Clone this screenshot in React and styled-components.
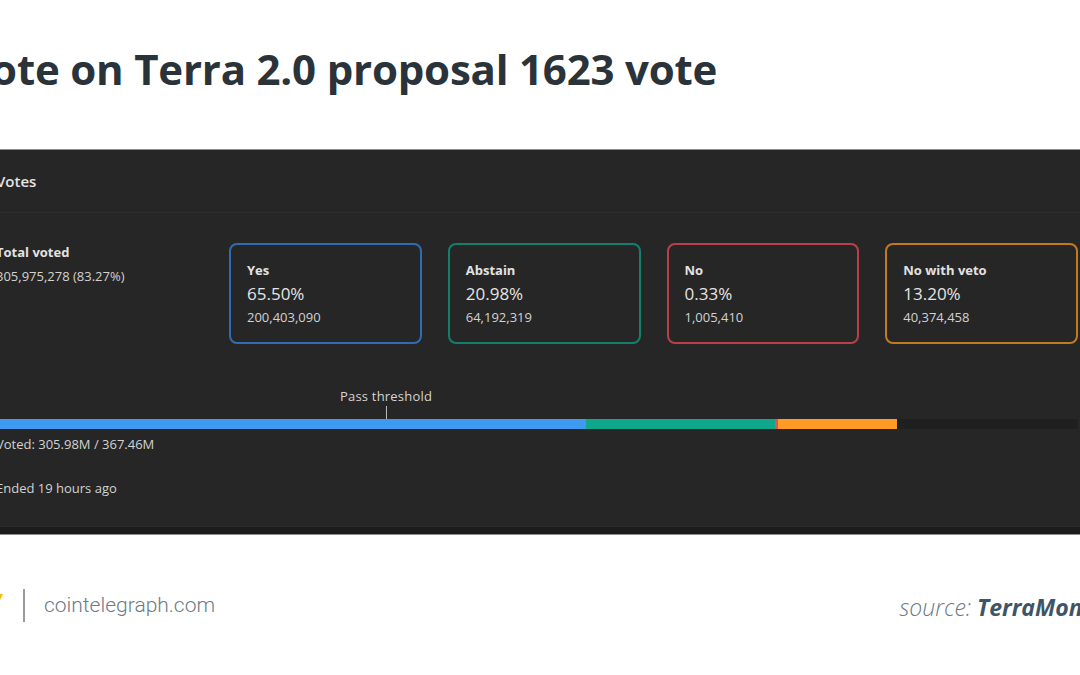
import styled, { createGlobalStyle } from "styled-components";

const options = [
  { key: "yes", label: "Yes", percent: 65.5, amount: "200,403,090", border: "#2f6db2", fill: "#3d9af0" },
  { key: "abstain", label: "Abstain", percent: 20.98, amount: "64,192,319", border: "#12806b", fill: "#0fa88c" },
  { key: "no", label: "No", percent: 0.33, amount: "1,005,410", border: "#b8404b", fill: "#e6505f" },
  { key: "veto", label: "No with veto", percent: 13.2, amount: "40,374,458", border: "#c17a20", fill: "#ff9a24" },
];

const turnout = 83.27;
const threshold = 36.05;

export default function App() {
  return (
    <Page>
      <GlobalStyle />
      <Title>Vote on Terra 2.0 proposal 1623 vote</Title>
      <VotesPanel />
      <Footer>
        <Logo viewBox="0 0 24 30">
          <path d="M0 4 L24 4 L20 12 L8 12 L8 26 L0 26 Z" fill="#f7b91c" />
        </Logo>
        <Divider />
        <Domain>cointelegraph.com</Domain>
        <Source>
          source: <strong>TerraMonitor</strong>
        </Source>
      </Footer>
    </Page>
  );
}

function VotesPanel() {
  return (
    <Panel>
      <PanelHeader>Votes</PanelHeader>
      <PanelBody>
        <Summary>
          <Total>
            <TextStrong>Total voted</TextStrong>
            <TextValue>305,975,278 (83.27%)</TextValue>
          </Total>
          <Cards>
            {options.map((o) => (
              <Card key={o.key} $border={o.border}>
                <TextStrong>{o.label}</TextStrong>
                <Percent>{o.percent.toFixed(2)}%</Percent>
                <TextValue>{o.amount}</TextValue>
              </Card>
            ))}
          </Cards>
        </Summary>
        <ThresholdRow>
          <Marker style={{ left: `${threshold}%` }}>
            <MarkerLabel>Pass threshold</MarkerLabel>
            <Tick />
          </Marker>
        </ThresholdRow>
        <Bar>
          {options.map((o) => (
            <Segment
              key={o.key}
              $fill={o.fill}
              style={{ width: `${(o.percent * turnout) / 100}%` }}
            />
          ))}
        </Bar>
        <Voted>Voted: 305.98M / 367.46M</Voted>
        <Ended>Ended 19 hours ago</Ended>
      </PanelBody>
      <PanelFoot />
    </Panel>
  );
}

const GlobalStyle = createGlobalStyle`
  body {
    margin: 0;
    background: #ffffff;
    overflow: hidden;
  }
`;

const Page = styled.div`
  width: 1080px;
  height: 675px;
  overflow: hidden;
  display: flex;
  flex-direction: column;
  background: #ffffff;
`;

const Title = styled.h1`
  margin: 40px 0 0 -36px;
  font-family: "Open Sans", sans-serif;
  font-weight: 700;
  font-size: 42px;
  line-height: 57px;
  letter-spacing: -0.2px;
  color: #2a333a;
  white-space: nowrap;
`;

const Panel = styled.section`
  margin: 52px -30px 0 -20px;
  background: #262626;
  border-top: 1px solid #8d8d8d;
  border-bottom: 1px solid #8d8d8d;
  font-family: "Open Sans", sans-serif;
  color: #dcdcdc;
`;

const PanelHeader = styled.div`
  height: 62px;
  padding: 0 16px;
  display: flex;
  align-items: center;
  font-size: 15px;
  font-weight: 600;
  color: #e4e4e4;
  border-bottom: 1px solid #2f2f2f;
`;

const PanelBody = styled.div`
  padding: 30px 32px 29px 16px;
  display: flex;
  flex-direction: column;
`;

const Summary = styled.div`
  display: flex;
`;

const Total = styled.div`
  width: 233px;
  display: flex;
  flex-direction: column;
  gap: 6px;
`;

const Cards = styled.div`
  flex: 1;
  display: grid;
  grid-template-columns: repeat(4, 1fr);
  gap: 26px;
`;

const Card = styled.div`
  height: 101px;
  box-sizing: border-box;
  padding: 16px 16px 0;
  border: 2px solid ${(p) => p.$border};
  border-radius: 8px;
  display: flex;
  flex-direction: column;
`;

const TextStrong = styled.div`
  font-size: 13px;
  line-height: 18px;
  font-weight: 700;
  color: #e2e2e2;
`;

const TextValue = styled.div`
  font-size: 13px;
  line-height: 18px;
  color: #d2d2d2;
`;

const Percent = styled.div`
  margin: 3px 0;
  font-size: 17px;
  line-height: 23px;
  color: #e4e4e4;
`;

const ThresholdRow = styled.div`
  position: relative;
  height: 32px;
  margin-top: 43px;
`;

const Marker = styled.div`
  position: absolute;
  top: 0;
  transform: translateX(-50%);
  display: flex;
  flex-direction: column;
  align-items: center;
`;

const MarkerLabel = styled.div`
  font-size: 13px;
  line-height: 18px;
  letter-spacing: 0.2px;
  color: #d4d4d4;
  white-space: nowrap;
`;

const Tick = styled.div`
  width: 1px;
  height: 13px;
  margin-top: 1px;
  background: #bdbdbd;
`;

const Bar = styled.div`
  height: 10px;
  display: flex;
  background: #1f1f1f;
`;

const Segment = styled.div`
  height: 100%;
  background: ${(p) => p.$fill};
`;

const Voted = styled.div`
  margin-top: 6px;
  font-size: 13px;
  line-height: 18px;
  color: #d2d2d2;
`;

const Ended = styled(Voted)`
  margin-top: 26px;
`;

const PanelFoot = styled.div`
  height: 7px;
  background: #1c1c1c;
  border-top: 1px solid #2c2c2c;
`;

const Footer = styled.footer`
  flex: 1;
  display: flex;
  align-items: center;
  font-family: Roboto, sans-serif;
`;

const Logo = styled.svg`
  width: 24px;
  height: 30px;
  margin-left: -21px;
  flex: none;
`;

const Divider = styled.div`
  width: 2px;
  height: 33px;
  margin-left: 20px;
  background: #9a9a9a;
  flex: none;
`;

const Domain = styled.div`
  margin-left: 19px;
  font-size: 21px;
  font-weight: 300;
  color: #6c7b86;
  white-space: nowrap;
`;

const Source = styled.div`
  margin-left: auto;
  margin-right: -42px;
  padding-top: 4px;
  font-family: "Open Sans", sans-serif;
  font-style: italic;
  font-weight: 300;
  font-size: 23px;
  color: #6a7a86;
  white-space: nowrap;

  strong {
    font-weight: 700;
    color: #3d5566;
  }
`;
